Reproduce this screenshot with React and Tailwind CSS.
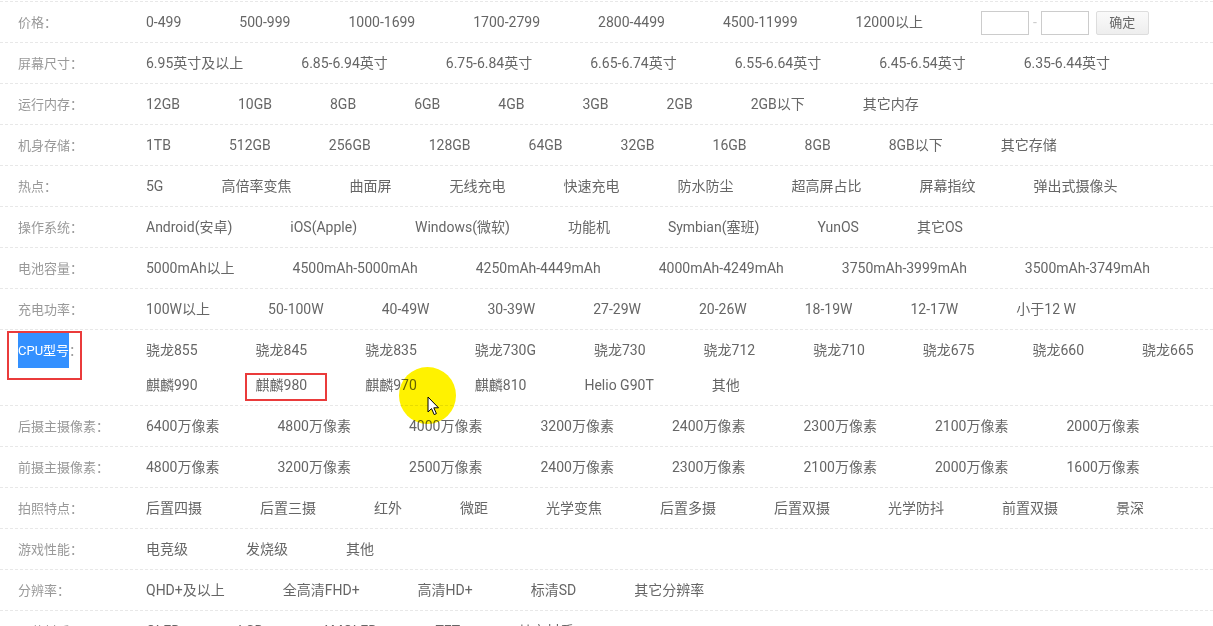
const rows = [
  { label: '价格', items: ['0-499', '500-999', '1000-1699', '1700-2799', '2800-4499', '4500-11999', '12000以上'], price: true },
  { label: '屏幕尺寸', items: ['6.95英寸及以上', '6.85-6.94英寸', '6.75-6.84英寸', '6.65-6.74英寸', '6.55-6.64英寸', '6.45-6.54英寸', '6.35-6.44英寸'] },
  { label: '运行内存', items: ['12GB', '10GB', '8GB', '6GB', '4GB', '3GB', '2GB', '2GB以下', '其它内存'] },
  { label: '机身存储', items: ['1TB', '512GB', '256GB', '128GB', '64GB', '32GB', '16GB', '8GB', '8GB以下', '其它存储'] },
  { label: '热点', items: ['5G', '高倍率变焦', '曲面屏', '无线充电', '快速充电', '防水防尘', '超高屏占比', '屏幕指纹', '弹出式摄像头'] },
  { label: '操作系统', items: ['Android(安卓)', 'iOS(Apple)', 'Windows(微软)', '功能机', 'Symbian(塞班)', 'YunOS', '其它OS'] },
  { label: '电池容量', items: ['5000mAh以上', '4500mAh-5000mAh', '4250mAh-4449mAh', '4000mAh-4249mAh', '3750mAh-3999mAh', '3500mAh-3749mAh'] },
  { label: '充电功率', items: ['100W以上', '50-100W', '40-49W', '30-39W', '27-29W', '20-26W', '18-19W', '12-17W', '小于12 W'] },
  { label: 'CPU型号', selected: true, items: ['骁龙855', '骁龙845', '骁龙835', '骁龙730G', '骁龙730', '骁龙712', '骁龙710', '骁龙675', '骁龙660', '骁龙665', '麒麟990', '麒麟980', '麒麟970', '麒麟810', 'Helio G90T', '其他'] },
  { label: '后摄主摄像素', items: ['6400万像素', '4800万像素', '4000万像素', '3200万像素', '2400万像素', '2300万像素', '2100万像素', '2000万像素'] },
  { label: '前摄主摄像素', items: ['4800万像素', '3200万像素', '2500万像素', '2400万像素', '2300万像素', '2100万像素', '2000万像素', '1600万像素'] },
  { label: '拍照特点', items: ['后置四摄', '后置三摄', '红外', '微距', '光学变焦', '后置多摄', '后置双摄', '光学防抖', '前置双摄', '景深'] },
  { label: '游戏性能', items: ['电竞级', '发烧级', '其他'] },
  { label: '分辨率', items: ['QHD+及以上', '全高清FHD+', '高清HD+', '标清SD', '其它分辨率'] },
  { label: '屏幕材质', items: ['OLED', 'LCD', 'AMOLED', 'TFT', '其它材质'] },
];

function PriceInputs() {
  return (
    <div className="flex items-center">
      <input className="w-[48px] h-[24px] border border-[#cccccc] bg-white outline-none" />
      <span className="px-[4px] text-[#cccccc]">-</span>
      <input className="w-[48px] h-[24px] border border-[#cccccc] bg-white outline-none" />
      <button className="ml-[7px] w-[53px] h-[24px] leading-[22px] border border-[#dddddd] rounded-[2px] bg-gradient-to-b from-[#fafafa] to-[#eeeeee] text-[13px] text-[#666666]">
        确定
      </button>
    </div>
  );
}

function Cursor() {
  return (
    <svg width="14" height="21" viewBox="0 0 14 21" className="absolute left-[427px] top-[396px]">
      <path d="M1 1 L1 16 L4.5 12.6 L7.2 18.6 L9.4 17.6 L6.8 11.8 L11.5 11.8 Z" fill="#ffffff" stroke="#000000" strokeWidth="1" strokeLinejoin="round" />
    </svg>
  );
}

export default function App() {
  return (
    <div className="relative h-[626px] overflow-hidden bg-white font-[Roboto,Noto_Sans_CJK_SC,sans-serif]">
      <div className="pt-[1px]">
        {rows.map((row) => (
          <div key={row.label} className="flex border-t border-dashed border-[#e8e8e8] pt-[3px] pb-[2px]">
            <div className="w-[146px] shrink-0 pl-[18px] text-[13px] leading-[35px] text-[#999999]">
              {row.selected ? (
                <span className="inline-block h-[35px] bg-[#3390ff] text-white">{row.label}</span>
              ) : (
                row.label
              )}
              ：
            </div>
            <div className="flex flex-1 flex-wrap gap-x-[58px] pr-[10px] text-[14px] leading-[35px] text-[#666666]">
              {row.items.map((item) => (
                <span key={item} className="whitespace-nowrap">{item}</span>
              ))}
              {row.price && <PriceInputs />}
            </div>
          </div>
        ))}
      </div>

      {/* annotations from the recording */}
      <div className="absolute left-[7px] top-[331px] w-[75px] h-[49px] border-2 border-[#ea3b3b]" />
      <div className="absolute left-[245px] top-[373px] w-[82px] h-[28px] border-2 border-[#ea3b3b]" />
      <div className="absolute left-[399px] top-[367px] w-[57px] h-[57px] rounded-full bg-[#fff200] mix-blend-multiply" />
      <Cursor />
    </div>
  );
}
